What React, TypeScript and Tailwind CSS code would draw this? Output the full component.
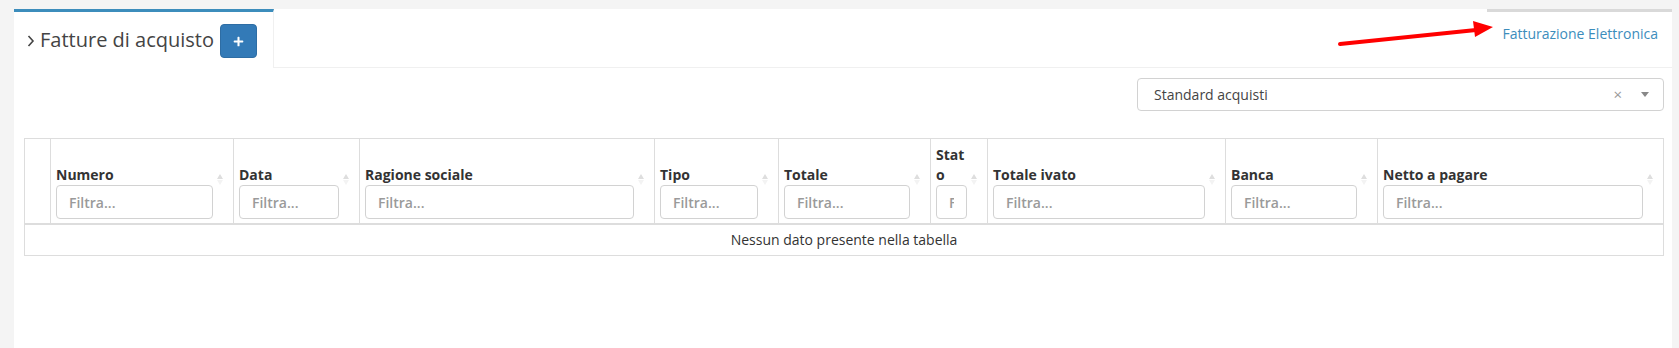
import React from "react";
import { FaPlus } from "react-icons/fa";

type Col = { label: string; width: number; labelClass?: string };

const columns: Col[] = [
  { label: "Numero", width: 183 },
  { label: "Data", width: 126 },
  { label: "Ragione sociale", width: 295 },
  { label: "Tipo", width: 124 },
  { label: "Totale", width: 152 },
  { label: "Stato", width: 57, labelClass: "break-all" },
  { label: "Totale ivato", width: 238 },
  { label: "Banca", width: 152 },
  { label: "Netto a pagare", width: 286 },
];

const SortIcon: React.FC = () => (
  <div className="w-[20px] shrink-0 self-stretch flex flex-col justify-end pb-[34px] pl-[4px]">
    <div className="w-0 h-0 border-l-[3px] border-r-[3px] border-b-[5px] border-l-transparent border-r-transparent border-b-[#dedede]" />
    <div className="mt-[1px] w-0 h-0 border-l-[3px] border-r-[3px] border-t-[5px] border-l-transparent border-r-transparent border-t-[#f3f3f3]" />
  </div>
);

const App: React.FC = () => {
  return (
    <div className="relative min-h-screen bg-[#f4f4f4] pt-[9px] pl-[14px] pr-[7px] font-['Open_Sans',sans-serif] text-[#333]">
      <div className="bg-white h-[339px]">
        {/* tabs */}
        <div className="flex h-[59px]">
          <div className="w-[260px] shrink-0 border-t-[3px] border-t-[#3c8dbc] border-r border-r-[#f0f0f0] flex items-center pl-[13px] pb-[1px]">
            <svg width="8" height="12" viewBox="0 0 8 12" className="mr-[5px] mt-[2px]">
              <polyline points="1.5,1 6,6 1.5,11" fill="none" stroke="#444" strokeWidth="1.6" />
            </svg>
            <span className="text-[20px] leading-none text-[#444]">Fatture di acquisto</span>
            <button className="ml-[6px] mt-[3px] w-[37px] h-[34px] rounded-[4px] bg-[#337ab7] border border-[#2e6da4] flex items-center justify-center text-white">
              <FaPlus size={11} />
            </button>
          </div>
          <div className="flex-1 flex justify-end border-t-[3px] border-t-white border-b border-b-[#f0f0f0]">
            <div className="-mt-[3px] border-t-[3px] border-t-[#d9d9d9] pl-[15px] pr-[14px] pt-[12px] text-[14px] leading-[20px] text-[#3c8dbc]">
              Fatturazione Elettronica
            </div>
          </div>
        </div>

        <div className="pl-[10px]">
          <div className="w-[1640px]">
            {/* select */}
            <div className="flex justify-end mt-[10px]">
              <div className="w-[527px] h-[33px] border border-[#d2d2d2] rounded-[4px] flex items-center pl-[16px] pr-[12px] text-[14px] text-[#444]">
                <span className="flex-1">Standard acquisti</span>
                <span className="text-[#999] text-[15px] leading-none mr-[19px]">×</span>
                <span className="w-0 h-0 border-l-[4px] border-r-[4px] border-t-[5px] border-l-transparent border-r-transparent border-t-[#888] mr-[2px]" />
              </div>
            </div>

            {/* table */}
            <table className="mt-[27px] w-[1640px] table-fixed border-collapse border border-[#dddddd] text-[14px]">
              <colgroup>
                <col style={{ width: 26 }} />
                {columns.map((c) => (
                  <col key={c.label} style={{ width: c.width }} />
                ))}
              </colgroup>
              <thead>
                <tr>
                  <th className="border border-[#dddddd] border-b-2" />
                  {columns.map((c) => (
                    <th
                      key={c.label}
                      className="border border-[#dddddd] border-b-2 align-bottom pl-[5px] pt-[6px] pb-[4px] text-left font-bold"
                    >
                      <div className="flex items-end">
                        <div className="flex-1 min-w-0">
                          <div className={`leading-[20px] ${c.labelClass ?? ""}`}>{c.label}</div>
                          <input
                            placeholder="Filtra..."
                            className="w-full h-[34px] border border-[#d2d2d2] rounded-[4px] px-[12px] text-[14px] font-semibold placeholder:text-[#9a9a9a] outline-none"
                          />
                        </div>
                        <SortIcon />
                      </div>
                    </th>
                  ))}
                </tr>
              </thead>
              <tbody>
                <tr>
                  <td colSpan={10} className="border border-[#dddddd] text-center py-[5px] leading-[20px]">
                    Nessun dato presente nella tabella
                  </td>
                </tr>
              </tbody>
            </table>
          </div>
        </div>
      </div>

      {/* red arrow */}
      <svg className="absolute left-[1330px] top-[15px] pointer-events-none" width="170" height="35" viewBox="0 0 170 35">
        <line x1="10" y1="29" x2="146" y2="15" stroke="#ff0000" strokeWidth="4" strokeLinecap="round" />
        <polygon points="163,12 143,6 145,22" fill="#ff0000" />
      </svg>
    </div>
  );
};

export default App;
